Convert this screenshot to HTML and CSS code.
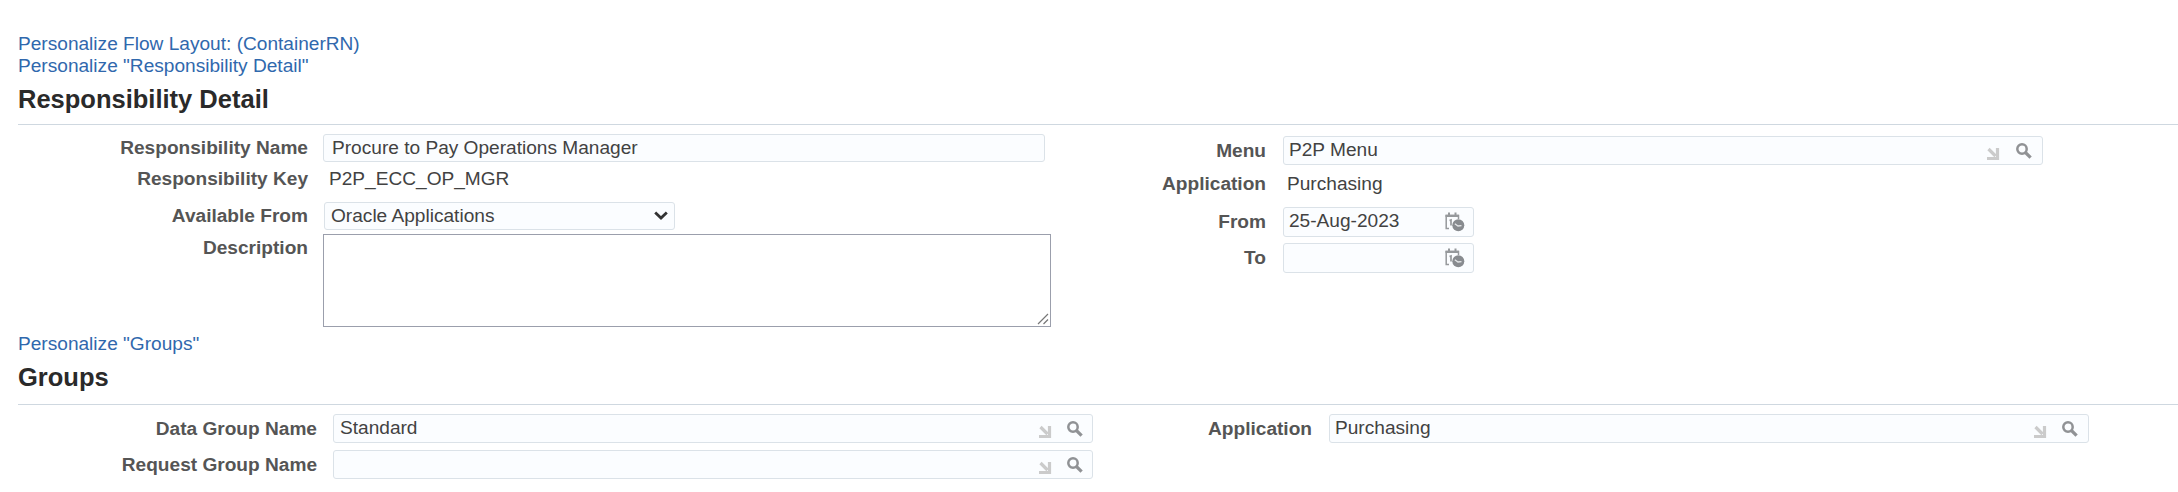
FILE: index.html
```html
<!DOCTYPE html>
<html lang="en">
<head>
<meta charset="utf-8">
<title>Responsibility Detail</title>
<link rel="stylesheet" href="styles.css">
</head>
<body>
<svg class="defs" width="0" height="0" aria-hidden="true">
  <symbol id="arrow" viewBox="0 0 14 14"><path d="M2.500 2 9.500 9M11.500 1V11.500H1" fill="none" stroke="#cbcbcb" stroke-width="3.200"/></symbol>
  <symbol id="search" viewBox="0 0 16 16"><circle cx="6" cy="6" r="4.700" fill="none" stroke="#909295" stroke-width="2.500"/><path d="M9.300 9.300 14.600 14.600" stroke="#909295" stroke-width="3.300"/></symbol>
  <symbol id="calendar" viewBox="0 0 20 20"><path d="M4 16.500H1.200V3.500H13.500V7" fill="none" stroke="#96999c" stroke-width="1.500"/><path d="M0.500 2.800H14V5H0.500ZM3 0.500H5V4H3ZM9.500 0.500H11.500V4H9.500Z" fill="#96999c"/><path d="M4.500 8.500 6 8V13.500" fill="none" stroke="#96999c" stroke-width="1.700"/><circle cx="13.300" cy="13.300" r="6" fill="#888b8f"/><path d="M9.800 11.800 13 14 16.500 13.700" fill="none" stroke="#e4e6e8" stroke-width="1.300"/></symbol>
</svg>
<main class="page">
  <a class="link">Personalize Flow Layout: (ContainerRN)</a>
  <a class="link">Personalize "Responsibility Detail"</a>
  <section class="section detail">
    <h2 class="heading">Responsibility Detail</h2>
    <div class="columns">
      <div class="column left">
        <div class="row row-name"><label class="label">Responsibility Name</label><div class="field"><span class="value">Procure to Pay Operations Manager</span></div></div>
        <div class="row row-key"><label class="label">Responsibility Key</label><span class="value plain">P2P_ECC_OP_MGR</span></div>
        <div class="row row-available"><label class="label">Available From</label><div class="field select"><span class="value">Oracle Applications</span><svg class="chevron" viewBox="0 0 14 9"><path d="M1.200 1.500 7 7 12.800 1.500" fill="none" stroke="#333" stroke-width="2.800"/></svg></div></div>
        <div class="row row-description"><label class="label">Description</label><div class="textarea"><svg class="grip" viewBox="0 0 12 12"><path d="M1 11 11 1M6.500 11 11 6.500" stroke="#777" stroke-width="1.200"/></svg></div></div>
      </div>
      <div class="column right">
        <div class="row row-menu"><label class="label">Menu</label><div class="field lov"><span class="value">P2P Menu</span><svg class="arrow"><use href="#arrow"/></svg><svg class="search"><use href="#search"/></svg></div></div>
        <div class="row row-application"><label class="label">Application</label><span class="value plain">Purchasing</span></div>
        <div class="row row-from"><label class="label">From</label><div class="field date"><span class="value">25-Aug-2023</span><svg class="calendar"><use href="#calendar"/></svg></div></div>
        <div class="row row-to"><label class="label">To</label><div class="field date"><span class="value"></span><svg class="calendar"><use href="#calendar"/></svg></div></div>
      </div>
    </div>
  </section>
  <a class="link">Personalize "Groups"</a>
  <section class="section groups">
    <h2 class="heading">Groups</h2>
    <div class="columns">
      <div class="column left">
        <div class="row row-group"><label class="label">Data Group Name</label><div class="field lov"><span class="value">Standard</span><svg class="arrow"><use href="#arrow"/></svg><svg class="search"><use href="#search"/></svg></div></div>
        <div class="row row-group"><label class="label">Request Group Name</label><div class="field lov"><span class="value"></span><svg class="arrow"><use href="#arrow"/></svg><svg class="search"><use href="#search"/></svg></div></div>
      </div>
      <div class="column right">
        <div class="row row-group"><label class="label">Application</label><div class="field lov"><span class="value">Purchasing</span><svg class="arrow"><use href="#arrow"/></svg><svg class="search"><use href="#search"/></svg></div></div>
      </div>
    </div>
  </section>
</main>
</body>
</html>
```
FILE: styles.css
```css
* { box-sizing: border-box; }
body {
  margin: 0;
  background: #fff;
  color: #424242;
  font: 19.1px/20px "Liberation Sans", Arial, sans-serif;
  overflow: hidden;
}
.defs { display: block; height: 0; }
.page { padding: 33px 0 0 18px; height: 492px; }
.link { display: block; height: 22px; line-height: 22px; color: #3068ad; }
.heading {
  margin: 0;
  height: 48px;
  padding-top: 8px;
  border-bottom: 1px solid #cfd8e0;
  color: #2a2a2a;
  font-size: 25.5px;
  line-height: 28px;
}
.detail { height: 256px; }
.columns { display: flex; }
.column { flex: none; }
.row { display: flex; align-items: flex-start; }
.label {
  flex: none;
  text-align: right;
  font-weight: bold;
  color: #555;
  white-space: nowrap;
}
.value { flex: 1; white-space: nowrap; }
.field {
  display: flex;
  align-items: flex-start;
  background: #fbfdff;
  border: 1px solid #dbe2e8;
  border-radius: 3px;
  padding-left: 8px;
}
svg { flex: none; }

/* Responsibility detail */
.detail .left { width: 1050px; }
.detail .left .label { width: 290px; margin-right: 15px; }
.row-name { height: 44px; padding-top: 9px; }
.row-name .label { padding-top: 4px; }
.row-name .field { width: 722px; height: 28px; padding-top: 3px; }
.row-key { height: 33px; }
.row-key .value { padding-left: 6px; }
.row-available .label { padding-top: 4px; }
.row-available { height: 32px; }
.select { width: 351px; height: 28px; margin-left: 1px; padding: 3px 6px 0 6px; }
.chevron { width: 14px; height: 9px; margin-top: 5px; }
.row-description .label { padding-top: 4px; }
.textarea {
  display: flex;
  align-items: flex-end;
  justify-content: flex-end;
  width: 728px;
  height: 93px;
  padding: 1px;
  border: 1px solid #9b9fac;
}
.grip { width: 12px; height: 12px; }
.detail .right .label { width: 198px; margin-right: 17px; }
.row-menu { height: 49px; padding-top: 11px; }
.row-menu .label { padding-top: 5px; }
.lov { height: 29px; padding-top: 3px; padding-left: 5px; padding-right: 9px; }
.groups .left .lov { padding-left: 6px; }
.row-menu .field { width: 760px; padding-right: 10px; }
.arrow { width: 14px; height: 14px; margin: 7px 15px 0 0; }
.search { width: 16px; height: 16px; margin-top: 3px; }
.row-menu .arrow { margin-right: 16px; }
.row-application .value { padding-left: 4px; }
.row-application { height: 33px; }
.date { width: 191px; height: 30px; padding: 3px 8px 0 5px; }
.calendar { width: 20px; height: 20px; margin-top: 1px; }
.row-from { height: 36px; }
.row-from .label, .row-to .label { padding-top: 5px; }

/* Groups */
.groups .heading { height: 50px; }
.groups .left { width: 1075px; }
.groups .left .label { width: 299px; margin-right: 16px; }
.groups .right .label { width: 219px; margin-right: 17px; }
.groups .right .lov { padding-right: 10px; }
.groups .columns { padding-top: 9px; }
.row-group { height: 36px; }
.row-group .label { padding-top: 5px; }
.row-group .field { width: 760px; }
```
